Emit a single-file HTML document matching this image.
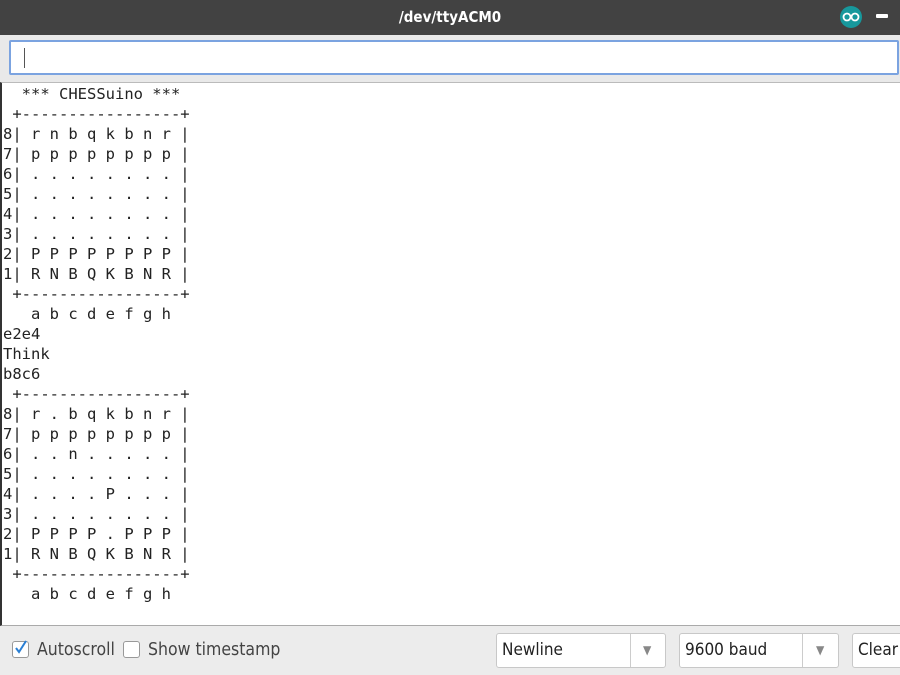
<!DOCTYPE html>
<html><head><style>
body{margin:0;width:900px;height:675px;overflow:hidden;background:#ececec;font-family:"DejaVu Sans Condensed","DejaVu Sans","Liberation Sans",sans-serif;position:relative}
.title{position:absolute;left:0;top:0;width:900px;height:35px;background:#424242;color:#fff;font-weight:bold;font-size:15px;text-align:center;line-height:34px}
.top{position:absolute;left:0;top:35px;width:900px;height:47px;background:#e9e9e9}
.inp{position:absolute;left:9px;top:40px;width:886px;height:31px;background:#fff;border:2px solid #7ba3e0;border-radius:2px}
.caret{position:absolute;left:13px;top:6px;width:1px;height:20px;background:#555}
.out{position:absolute;left:0;top:82px;width:898px;height:542px;background:#fff;border-left:2px solid #333;border-top:1px solid #bbb;border-bottom:1px solid #aaa}
pre{margin:0;position:absolute;left:1px;top:1px;font-family:"DejaVu Sans Mono","Liberation Mono",monospace;font-size:15.5px;line-height:20px;color:#222}
.bot{position:absolute;top:626px;left:0;width:900px;height:49px;font-size:17.5px;color:#444}
.cb{position:absolute;top:15px;width:15px;height:15px;border:1px solid #999;border-radius:3px;background:#fff}
.sel{position:absolute;top:7px;height:33px;border:1px solid #c8c8c8;border-radius:3px;background:#fff;font-size:17px;line-height:33px;color:#222}
</style></head><body>
<div class="title">/dev/ttyACM0</div>
<svg style="position:absolute;left:839px;top:6px" width="24" height="22"><ellipse cx="12" cy="11" rx="11" ry="11" fill="#17989c"/><circle cx="8" cy="11" r="3.5" fill="none" stroke="#fff" stroke-width="1.8"/><circle cx="16" cy="11" r="3.5" fill="none" stroke="#fff" stroke-width="1.8"/></svg>
<div style="position:absolute;left:876px;top:14px;width:12px;height:4px;background:#fff;border-radius:1px"></div>
<div class="top"></div>
<div class="inp"><div class="caret"></div></div>
<div class="out"><pre>  *** CHESSuino ***
 +-----------------+
8| r n b q k b n r |
7| p p p p p p p p |
6| . . . . . . . . |
5| . . . . . . . . |
4| . . . . . . . . |
3| . . . . . . . . |
2| P P P P P P P P |
1| R N B Q K B N R |
 +-----------------+
   a b c d e f g h
e2e4
Think
b8c6
 +-----------------+
8| r . b q k b n r |
7| p p p p p p p p |
6| . . n . . . . . |
5| . . . . . . . . |
4| . . . . P . . . |
3| . . . . . . . . |
2| P P P P . P P P |
1| R N B Q K B N R |
 +-----------------+
   a b c d e f g h</pre></div>
<div class="bot">
<div class="cb" style="left:12px"><svg width="15" height="15" style="position:absolute;left:0;top:-2px"><path d="M3 8 L6 12 L13 1" fill="none" stroke="#2a7fd4" stroke-width="2"/></svg></div>
<span style="position:absolute;left:37px;top:14px">Autoscroll</span>
<div class="cb" style="left:123px"></div>
<span style="position:absolute;left:148px;top:14px">Show timestamp</span>
<div class="sel" style="left:496px;width:168px"><span style="margin-left:5px">Newline</span><span style="position:absolute;left:133px;top:0;height:33px;border-left:1px solid #ccc"></span><span style="position:absolute;left:146px;color:#888;font-size:12px">▼</span></div>
<div class="sel" style="left:679px;width:158px"><span style="margin-left:5px">9600 baud</span><span style="position:absolute;left:122px;top:0;height:33px;border-left:1px solid #ccc"></span><span style="position:absolute;left:136px;color:#888;font-size:12px">▼</span></div>
<div class="sel" style="left:852px;width:60px"><span style="margin-left:5px">Clear</span></div>
</div>
</body></html>
